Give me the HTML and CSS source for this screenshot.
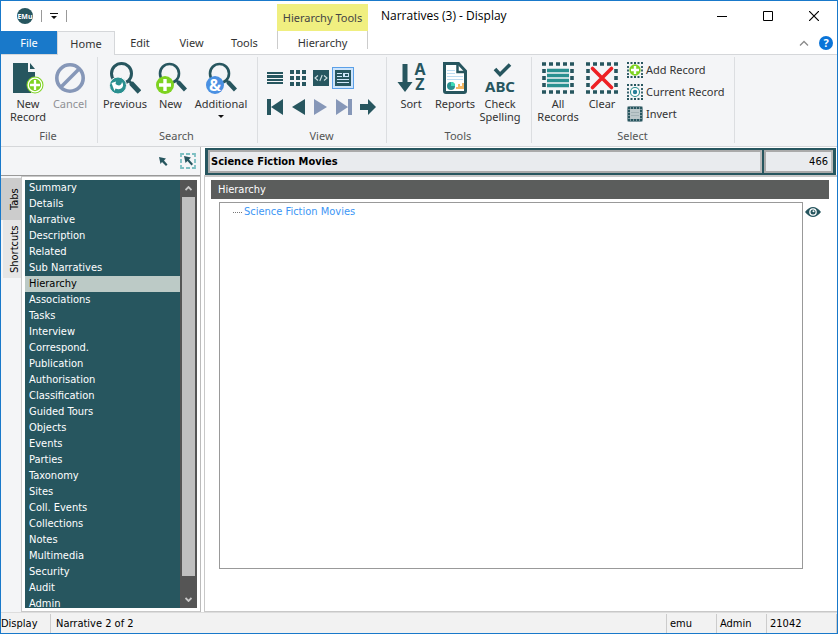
FILE: index.html
```html
<!DOCTYPE html>
<html lang="en">
<head>
<meta charset="utf-8">
<meta name="viewport" content="width=device-width, initial-scale=1">
<title>Narratives (3) - Display</title>
<link rel="stylesheet" href="styles.css">
</head>
<body>
<div class="window">
  <header class="titlebar">
    <div class="quick">
      <svg class="app-icon" width="16" height="16" viewBox="0 0 16 16"><circle cx="8" cy="8" r="8" fill="#27565f"/><text x="8" y="10.500" text-anchor="middle" class="app-text">EMu</text></svg>
      <span class="tick"></span>
      <button class="plain" aria-label="Customise toolbar"><svg width="8" height="7" viewBox="0 0 8 7"><path d="M0 0h8v1H0zM1 3h6L4 6z" fill="#111"/></svg></button>
      <span class="tick"></span>
    </div>
    <div class="context-title">Hierarchy Tools</div>
    <h1 class="title">Narratives (3) - Display</h1>
    <div class="win-buttons">
      <button class="plain" aria-label="Minimise"><svg width="10" height="10" viewBox="0 0 10 10"><path d="M0 5h10v1H0z"/></svg></button>
      <button class="plain" aria-label="Maximise"><svg width="10" height="10" viewBox="0 0 10 10"><path d="M.5.5h9v9h-9z" fill="none" stroke="#000"/></svg></button>
      <button class="plain" aria-label="Close"><svg width="10" height="10" viewBox="0 0 10 10"><path d="M0 0l10 10M10 0L0 10" fill="none" stroke="#000" stroke-width="1.200"/></svg></button>
    </div>
  </header>

  <nav class="tabs" aria-label="Ribbon">
    <button class="tab file">File</button>
    <button class="tab home">Home</button>
    <button class="tab edit">Edit</button>
    <button class="tab">View</button>
    <button class="tab">Tools</button>
    <button class="tab context">Hierarchy</button>
    <span class="spacer"></span>
    <button class="plain" aria-label="Collapse ribbon"><svg width="10" height="6" viewBox="0 0 10 6"><path d="M1 5.500l4-4 4 4" fill="none" stroke="#8a8a8a" stroke-width="1.300"/></svg></button>
    <button class="plain help" aria-label="Help"><svg width="14" height="14" viewBox="0 0 14 14"><circle cx="7" cy="7" r="7" fill="#0a74d8"/><text x="7" y="11" text-anchor="middle" class="help-text">?</text></svg></button>
  </nav>

  <div class="ribbon">
    <section class="group g-file">
      <div class="items">
        <button class="big w46"><svg width="32" height="32" viewBox="0 0 32 32"><path d="M1 1h15v9h7v12H19v9H1zM18 1l5 6h-5z" fill="#27565f"/><circle cx="23" cy="23" r="8.500" fill="#7ed321"/><circle cx="23" cy="23" r="6.800" fill="none" stroke="#fff" stroke-width="1.300"/><path d="M23 18v10M18 23h10" stroke="#fff" stroke-width="2.300"/></svg><span>New<br>Record</span></button>
        <button class="big w38" disabled><svg width="32" height="32" viewBox="0 0 32 32"><circle cx="16" cy="16" r="13.200" fill="none" stroke="#8697b8" stroke-width="3.600"/><path d="M7 25L25 7" stroke="#8697b8" stroke-width="3.600"/></svg><span>Cancel</span></button>
      </div>
      <h2>File</h2>
    </section>
    <section class="group g-search">
      <div class="items">
        <button class="big w46"><svg width="32" height="32" viewBox="0 0 32 32"><circle cx="12.500" cy="11.500" r="10" fill="none" stroke="#27565f" stroke-width="3"/><path d="M20 19l3 3" stroke="#27565f" stroke-width="3"/><path d="M22 21l8.500 9" stroke="#27565f" stroke-width="5"/><circle cx="9" cy="23.500" r="8.500" fill="#2a9090" stroke="#f4f5f7"/><path d="M2.500 21l4.500-1.500-.5 2.500c3 2.500 6 1.500 6.500-2 3 4-.5 9-6.500 6.500l-1 2.500z" fill="#fff"/></svg><span>Previous</span></button>
        <button class="big w45"><svg width="32" height="32" viewBox="0 0 32 32"><circle cx="14.500" cy="11.500" r="9.500" fill="none" stroke="#27565f" stroke-width="2.600"/><path d="M21 18l3 3" stroke="#27565f" stroke-width="3"/><path d="M23 20l7.500 8" stroke="#27565f" stroke-width="4.400"/><circle cx="10" cy="23" r="9" fill="#7ed321"/><path d="M10 17v12M4 23h12" stroke="#fff" stroke-width="3.400"/></svg><span>New</span></button>
        <button class="big w56"><svg width="32" height="32" viewBox="0 0 32 32"><circle cx="14.500" cy="11.500" r="9.500" fill="none" stroke="#27565f" stroke-width="2.600"/><path d="M21 18l3 3" stroke="#27565f" stroke-width="3"/><path d="M23 20l7.500 8" stroke="#27565f" stroke-width="4.400"/><circle cx="10" cy="23" r="9" fill="#4a90e2"/><text x="10" y="29" text-anchor="middle" class="amp">&amp;</text></svg><span>Additional</span><svg class="caret" width="6" height="3" viewBox="0 0 6 3"><path d="M0 0h6L3 3z" fill="#111"/></svg></button>
      </div>
      <h2>Search</h2>
    </section>
    <section class="group g-view">
      <div class="view-grid">
        <button class="plain" aria-label="List view"><svg width="16" height="16" viewBox="0 0 16 16" fill="#27565f"><path d="M0 2h16v2H0zM0 5h16v3H0zM0 9h16v2H0zM0 12h16v2H0z"/></svg></button>
        <button class="plain" aria-label="Contact sheet"><svg width="16" height="16" viewBox="0 0 16 16" fill="#27565f"><path d="M0 0h4v4H0zM6 0h4v4H6zM12 0h4v4h-4zM0 6h4v4H0zM6 6h4v4H6zM12 6h4v4h-4zM0 12h4v4H0zM6 12h4v4H6zM12 12h4v4h-4z"/></svg></button>
        <button class="plain" aria-label="Code view"><svg width="16" height="16" viewBox="0 0 16 16"><path d="M0 0h16v16H0z" fill="#27565f"/><path d="M5 5.500L2 8l3 2.500M11 5.500L14 8l-3 2.500M9.200 5L6.800 11" fill="none" stroke="#cfe0e2" stroke-width="1.100"/></svg></button>
        <button class="plain active" aria-label="Details view"><svg width="16" height="16" viewBox="0 0 16 16"><path d="M0 0h16v16H0z" fill="#27565f"/><path d="M2 3.500h5M2 6.500h5M2 9.500h12M2 12.500h12" stroke="#cfe6fa"/><path d="M8 3h6v4H8z" fill="#cfe6fa"/><path d="M10 4h3v2h-3z" fill="#27565f"/></svg></button>
        <i></i>
        <button class="plain" aria-label="First record"><svg width="16" height="16" viewBox="0 0 16 16"><path d="M0 0h4v16H0zM16 0v16L4 8z" fill="#27565f"/></svg></button>
        <button class="plain" aria-label="Previous record"><svg width="16" height="16" viewBox="0 0 16 16"><path d="M15 0v16L2 8z" fill="#27565f"/></svg></button>
        <button class="plain" aria-label="Next record"><svg width="16" height="16" viewBox="0 0 16 16"><path d="M1 0v16l13-8z" fill="#8697b8"/></svg></button>
        <button class="plain" aria-label="Last record"><svg width="16" height="16" viewBox="0 0 16 16"><path d="M12 0h4v16h-4zM0 0v16l12-8z" fill="#8697b8"/></svg></button>
        <button class="plain" aria-label="Go to record"><svg width="16" height="16" viewBox="0 0 16 16"><path d="M0 5h8V0l8 8-8 8v-5H0z" fill="#27565f"/></svg></button>
      </div>
      <h2>View</h2>
    </section>
    <section class="group g-tools">
      <div class="items">
        <button class="big w40"><svg width="32" height="32" viewBox="0 0 32 32" class="letters"><path d="M7.500 2h5v18h5L10 30 2.500 20h5z" fill="#27565f"/><text x="25" y="13" text-anchor="middle" class="az">A</text><text x="25" y="28" text-anchor="middle" class="az">Z</text></svg><span>Sort</span></button>
        <button class="big w48"><svg width="32" height="32" viewBox="0 0 32 32"><path d="M5.500 1.500h14l7 7.500v20q0 1.500-1.500 1.500H7q-1.500 0-1.500-1.500z" fill="#fff" stroke="#27565f" stroke-width="3"/><path d="M18.500 1v9H27" fill="none" stroke="#27565f" stroke-width="2.500"/><path d="M8 8.500h8M8 11.500h8M8 14.500h16M8 17.500h16" stroke="#bcdcf2" stroke-width="1.200"/><circle cx="12" cy="24" r="4" fill="#2a9090"/><path d="M12 20v4h4a4 4 0 0 0-4-4z" fill="#3ddcb8"/><path d="M18 27v-2M20 27v-5M22 27v-3M24 27v-6" stroke="#f0a030" stroke-width="1.500"/></svg><span>Reports</span></button>
        <button class="big w42"><svg width="32" height="32" viewBox="0 0 32 32" class="letters"><path d="M11 7l5 5.500L26 2.500" fill="none" stroke="#27565f" stroke-width="3.600"/><text x="16" y="30" text-anchor="middle" class="abc">ABC</text></svg><span>Check<br>Spelling</span></button>
      </div>
      <h2>Tools</h2>
    </section>
    <section class="group g-select">
      <div class="items">
        <button class="big w42"><svg width="32" height="32" viewBox="0 0 32 32"><path d="M0 2h32M0 30h32" stroke="#27565f" stroke-width="3.600" stroke-dasharray="4 3"/><path d="M2 7v18M30 7v18" stroke="#27565f" stroke-width="3.600" stroke-dasharray="4 3"/><path d="M5 8.500h22M5 13.500h22M5 18.500h22M5 23.500h22" stroke="#2a9090" stroke-width="3.400"/></svg><span>All<br>Records</span></button>
        <button class="big w46"><svg width="32" height="32" viewBox="0 0 32 32"><path d="M0 2h32M0 30h32" stroke="#27565f" stroke-width="3.600" stroke-dasharray="4 3"/><path d="M2 7v18M30 7v18" stroke="#27565f" stroke-width="3.600" stroke-dasharray="4 3"/><path d="M6.500 6.500l19 19M25.500 6.500l-19 19" stroke="#ee2024" stroke-width="3.600" stroke-linecap="round"/></svg><span>Clear</span></button>
        <div class="stack">
          <button class="small"><svg width="16" height="16" viewBox="0 0 16 16"><path d="M0 1h16M0 15h16M1 4v9M15 4v9" fill="none" stroke="#27565f" stroke-width="1.800" stroke-dasharray="2 1.500"/><circle cx="8" cy="8" r="5.700" fill="#7ed321"/><path d="M8 4v8M4 8h8" stroke="#fff" stroke-width="2.400"/></svg>Add Record</button>
          <button class="small"><svg width="16" height="16" viewBox="0 0 16 16"><path d="M0 1h16M0 15h16M1 4v9M15 4v9" fill="none" stroke="#27565f" stroke-width="1.800" stroke-dasharray="2 1.500"/><circle cx="8" cy="8" r="4.500" fill="#fff" stroke="#2a9090" stroke-width="1.100"/><circle cx="8" cy="8" r="2.200" fill="#27809a"/></svg>Current Record</button>
          <button class="small"><svg width="16" height="16" viewBox="0 0 16 16"><rect width="16" height="16" rx="2" fill="#7d979e"/><path d="M3 3h10v10H3z" fill="#bcc8ca"/><path d="M1 2h14M1 14h14M2 4v9M14 4v9" stroke="#27565f" stroke-width="2" stroke-dasharray="2 1"/><path d="M4 6.500h8M4 9.500h8" stroke="#a3b2b5"/></svg>Invert</button>
        </div>
      </div>
      <h2>Select</h2>
    </section>
  </div>

  <main class="main">
    <aside class="side">
      <div class="side-tools">
        <button class="plain" aria-label="Pointer"><svg width="16" height="16" viewBox="0 0 16 16"><path d="M4 4l7 1.500-2 2 3.500 4-1.500 1.500L7 9l-1.500 2z" fill="#27565f"/></svg></button>
        <button class="plain" aria-label="Select region"><svg width="16" height="16" viewBox="0 0 16 16"><path d="M1 4V1h3M6 1h4M12 1h3v3M15 6v4M15 12v3h-3M10 15H6M4 15H1v-3M1 10V6" fill="none" stroke="#7dbfc2" stroke-width="1.800"/><path d="M4 3l7 1.500-2 2 4 4.500-1.500 1.500L7.500 8 5.500 10z" fill="#27565f"/></svg></button>
      </div>
      <div class="side-body">
        <div class="vtabs">
          <button class="vtab on">Tabs</button>
          <button class="vtab">Shortcuts</button>
        </div>
        <div class="list-frame">
          <nav class="list" aria-label="Tabs">
            <a href="#">Summary</a><a href="#">Details</a><a href="#">Narrative</a><a href="#">Description</a><a href="#">Related</a><a href="#">Sub Narratives</a><a href="#" class="current">Hierarchy</a><a href="#">Associations</a><a href="#">Tasks</a><a href="#">Interview</a><a href="#">Correspond.</a><a href="#">Publication</a><a href="#">Authorisation</a><a href="#">Classification</a><a href="#">Guided Tours</a><a href="#">Objects</a><a href="#">Events</a><a href="#">Parties</a><a href="#">Taxonomy</a><a href="#">Sites</a><a href="#">Coll. Events</a><a href="#">Collections</a><a href="#">Notes</a><a href="#">Multimedia</a><a href="#">Security</a><a href="#">Audit</a><a href="#">Admin</a>
          </nav>
          <div class="scroll">
            <button class="plain" aria-label="Scroll up"><svg width="7" height="5" viewBox="0 0 7 5"><path d="M.5 4L3.500 1l3 3" fill="none" stroke="#c8c8c8" stroke-width="1.800"/></svg></button>
            <div class="thumb"></div>
            <button class="plain" aria-label="Scroll down"><svg width="7" height="5" viewBox="0 0 7 5"><path d="M.5 1l3 3 3-3" fill="none" stroke="#c8c8c8" stroke-width="1.800"/></svg></button>
          </div>
        </div>
      </div>
    </aside>
    <section class="content">
      <div class="record">
        <input class="summary" aria-label="Record summary" value="Science Fiction Movies" readonly>
        <input class="number" aria-label="Record number" value="466" readonly>
      </div>
      <div class="panel">
        <h2 class="panel-title">Hierarchy</h2>
        <div class="tree-row">
          <ul class="tree"><li><span class="branch"></span><a href="#">Science Fiction Movies</a></li></ul>
          <button class="plain eye" aria-label="View"><svg width="16" height="10" viewBox="0 0 16 10"><path d="M0 5q8-10 16 0-8 10-16 0z" fill="#27565f"/><circle cx="8" cy="5" r="3.800" fill="#fff"/><circle cx="8" cy="5" r="2.500" fill="#27565f"/><circle cx="8.500" cy="4.200" r="1" fill="#fff"/></svg></button>
        </div>
      </div>
    </section>
  </main>

  <footer class="status">
    <span class="mode">Display</span>
    <span class="position">Narrative 2 of 2</span>
    <span class="cell">emu</span>
    <span class="cell">Admin</span>
    <span class="cell last">21042</span>
  </footer>
</div>
</body>
</html>
```
FILE: styles.css
```css
* { box-sizing: border-box; }
:root {
  --teal: #27565f;
  --ribbon: #f4f5f7;
  --line: #d5d7da;
  --ui: "Noto Sans", "Open Sans", sans-serif;
  --form: "DejaVu Sans Condensed", "Noto Sans", sans-serif;
}
body { margin: 0; font: 11px/16px var(--form); color: #000; }
button { font: inherit; color: inherit; border: 0; padding: 0; background: none; }
h1, h2 { margin: 0; font: inherit; }
svg { display: block; flex: none; }
.plain { display: flex; align-items: center; justify-content: center; }
.window { display: flex; flex-direction: column; height: 100vh; min-height: 400px; border: 1px solid #1979ca; background: #fff; }

.titlebar { display: flex; height: 30px; font-family: var(--ui); }
.quick { display: flex; align-items: center; width: 276px; padding-left: 16px; gap: 8px; }
.tick { width: 1px; height: 12px; background: #999; }
.app-text { font: bold 7px var(--ui); fill: #fff; }
.context-title { width: 91px; margin-top: 3px; background: #f0ef80; color: #444; text-align: center; line-height: 28px; }
.title { flex: 1; padding-left: 13px; font-family: "Open Sans", sans-serif; font-size: 12px; line-height: 30px; }
.win-buttons { display: flex; }
.win-buttons button { width: 46px; }

.tabs { display: flex; height: 24px; border-bottom: 1px solid var(--line); font-family: var(--ui); color: #333; }
.tab { width: 53px; line-height: 23px; }
.edit { width: 50px; }
.file { width: 56px; background: #1979ca; color: #fff; }
.home { width: 58px; height: 24px; line-height: 21px; background: var(--ribbon); border: 1px solid var(--line); border-bottom: 0; }
.context { width: 91px; margin-left: 6px; height: 18px; border: solid #ccc; border-width: 0 1px; }
.spacer { flex: 1; }
.help { width: 22px; margin-left: 6px; }
.help-text { font: bold 11px var(--ui); fill: #fff; }

.ribbon { display: flex; height: 92px; padding-top: 2px; background: var(--ribbon); border-bottom: 1px solid var(--line); font-family: var(--ui); color: #333; }
.group { display: flex; flex-direction: column; height: 86px; border-right: 1px solid #dcdee1; padding-left: 4px; }
.group h2 { color: #555; text-align: center; line-height: 14px; margin-right: 6px; }
.g-file { width: 97px; }
.g-search { width: 160px; }
.g-view { width: 129px; padding-left: 5px; }
.g-tools { width: 145px; }
.g-select { width: 203px; padding-left: 5px; }
.items { display: flex; height: 74px; padding-top: 5px; }
.big { display: flex; flex-direction: column; align-items: center; line-height: 13px; }
.big span { margin-top: 3px; white-space: nowrap; }
.big:disabled { color: #8f9195; }
.caret { margin-top: 5px; }
.w38 { width: 38px; }
.w40 { width: 40px; }
.w42 { width: 42px; }
.w45 { width: 45px; }
.w46 { width: 46px; }
.w48 { width: 48px; }
.w56 { width: 56px; }
.letters { fill: var(--teal); overflow: visible; }
.amp { font: bold 16px var(--ui); fill: #fff; }
.az { font: bold 16px var(--ui); }
.abc { font: bold 15px var(--ui); }
.view-grid { display: grid; grid-template-columns: repeat(4, 23px) 26px; grid-auto-rows: 24px; row-gap: 5px; height: 74px; padding-top: 9px; }
.active { background: #cde4fb; border: 1px solid #5ba0e8; width: 22px; height: 22px; margin-top: 1px; }
.stack { display: flex; flex-direction: column; margin: -3px 0 0 2px; }
.small { display: flex; align-items: center; gap: 3px; height: 22px; white-space: nowrap; }

.main { display: flex; flex: 1; min-height: 0; background: var(--ribbon); }
.side { display: flex; flex-direction: column; width: 200px; border-right: 1px solid #bbb; }
.side-tools { display: flex; justify-content: flex-end; align-items: center; gap: 9px; height: 29px; padding-right: 4px; border-bottom: 1px solid #999; }
.side-body { display: flex; flex: 1; min-height: 0; }
.vtabs { display: flex; flex-direction: column; align-items: flex-end; width: 20px; padding-top: 2px; }
.vtab { writing-mode: vertical-rl; transform: rotate(180deg); width: 18px; height: 58px; background: #e6e6e6; line-height: 13px; padding-right: 5px; }
.vtab.on { width: 20px; height: 42px; padding-right: 7px; background: #ccc; }
.list-frame { display: flex; flex: 1; padding: 3px; border: solid #c8c8c8; border-width: 1px 0 1px 1px; background: #fff; }
.list { flex: 1; overflow: hidden; background: var(--teal); }
.list a { display: block; height: 16px; padding-left: 4px; color: #fff; text-decoration: none; }
.list a.current { background: #bccac6; color: #000; }
.scroll { display: flex; flex-direction: column; width: 17px; padding: 0 2px; background: #555; }
.scroll button { height: 17px; }
.thumb { flex: 1; margin-bottom: 15px; background: #c0c0c0; }

.content { display: flex; flex-direction: column; flex: 1; padding-left: 3px; min-width: 0; background: #fff; }
.record { display: flex; gap: 2px; height: 27px; margin: 1px 1px 0 1px; padding: 2px 3px; background: var(--teal); }
.record input { min-width: 0; border: 2px solid #aaa; border-right-color: #bbb; background: #e9ebee; font: 11px/16px var(--form); padding: 0 1px; color: #000; }
.record .summary { flex: 1; font-weight: bold; }
.record .number { width: 69px; text-align: right; padding-right: 3px; }
.panel { display: flex; flex-direction: column; flex: 1; border: solid #c8c8c8; border-width: 2px 0 1px 1px; padding: 3px 8px 42px 6px; }
.panel-title { background: #5b5d5c; color: #fff; line-height: 19px; padding-left: 7px; }
.tree-row { display: flex; flex: 1; margin-top: 3px; padding-left: 8px; }
.tree { flex: 1; margin: 0; padding: 1px 0 0 13px; list-style: none; border: 1px solid #999; }
.tree li { display: flex; align-items: center; gap: 2px; }
.tree a { color: #3c96f5; text-decoration: none; }
.branch { width: 9px; border-top: 1px dotted #777; }
.eye { width: 20px; height: 20px; margin-right: 6px; }

.status { display: flex; height: 21px; padding-top: 1px; border-top: 1px solid #ddd; background: #f2f2f2; line-height: 19px; }
.mode { width: 49px; }
.position { flex: 1; padding-left: 5px; border-left: 1px solid #ccc; }
.cell { width: 50px; padding-left: 3px; border-left: 1px solid #ccc; }
.last { width: 71px; border-right: 1px solid #ccc; }
```
